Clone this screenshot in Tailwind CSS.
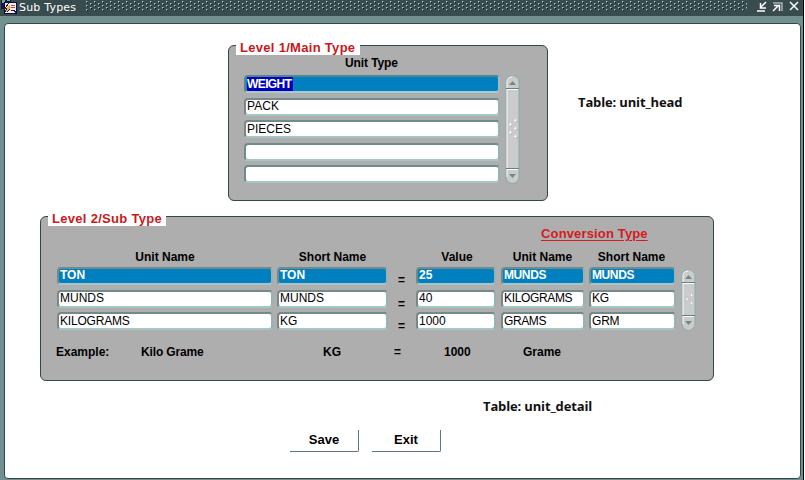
<!DOCTYPE html>
<html lang="en"><head><meta charset="utf-8"><title>Sub Types</title>
<script src="https://cdn.jsdelivr.net/npm/@tailwindcss/browser@4"></script></head>
<body class="w-[805px] h-[480px] overflow-hidden bg-white font-['Liberation_Sans',Arial,sans-serif] text-[12px] text-black">
<div class="w-[804px] h-[480px] bg-[#71908f] border-r border-black flex flex-col">
<header class="h-4 shrink-0 bg-[#384b4e] flex items-center text-white">
<svg class="ml-[1px] shrink-0" width="16" height="16" shape-rendering="crispEdges"><path d="M0 0h10v4H3v5H0z" fill="#101936"/><path d="M1 0h3v3H1zM6 0h3v1H6z" fill="#6ba5a4"/><path d="M3 2h13v12H3z" fill="#080850"/><path d="M4 3h11v10H4z" fill="#f5ede0"/><path d="M10 5h4v1h-4zM10 7h4v1h-4z" fill="#b64862"/><path d="M5 8l4-4v3h1l-5 5 1-3H5z" fill="#e8b23c"/><path d="M8 3L4 8h2l-2 4M9 9L6 12M10 10h3v1h1v2" stroke="#26184f" fill="none"/></svg>
<span class="ml-[2px] w-[68px] font-['DejaVu_Sans',sans-serif] text-[11px] tracking-[0.2px] leading-[14px] whitespace-nowrap -mt-[1px]">Sub Types</span>
<svg class="-ml-[1px] shrink-0" width="661" height="14" shape-rendering="crispEdges"><defs><pattern id="dots" width="8" height="4" patternUnits="userSpaceOnUse"><path d="M0 0h1v1H0zM4 2h1v1H4z" fill="#9bcac6"/><path d="M1 0h1v1H1zM0 1h1v1H0zM5 2h1v1H5zM4 3h1v1H4z" fill="#6b8f8c"/><path d="M1 1h1v1H1zM5 3h1v1H5z" fill="#050b0c"/></pattern></defs><path d="M0 0h661v10H0z" fill="url(#dots)"/></svg>
<svg class="ml-[9px] shrink-0" width="46" height="14" fill="none" stroke="#fff" stroke-width="1.5"><path d="M1 10h8M10 1L5 6M4.5 2v5H10"/><path d="M17 2h9v8" stroke="#a9b2b4"/><path d="M17 10l6-6M18 4.5h5.5V10"/><path d="M34 1l8 8M42 1l-8 8"/></svg>
</header>
<main class="mt-[7px] ml-1 w-[797px] h-[456px] border border-[#314848] rounded-[4px] bg-white flex flex-col">
<div class="ml-[223px] mt-[21px] flex items-start">
<section class="w-[320px] h-[156px] bg-[#aeaeae] border border-[#314848] rounded-[6px]">
<h2 class="-mt-[5px] ml-[7px] w-[124px] h-[14px] bg-white pl-[4px] text-[13px] leading-[13px] font-bold text-[#c71920] tracking-[0.3px] whitespace-nowrap">Level 1/Main Type</h2>
<div class="ml-[116px] h-[20px] text-[12px] leading-[17px] font-bold tracking-[-0.1px]">Unit Type</div>
<div class="ml-[15px] flex gap-[5px]">
<div class="w-[256px] grid grid-rows-[18px_18px_18px_18px_18px] gap-[4.5px]">
<div class="border-2 border-t-[#55858f] border-l-[#55858f] border-r-[#9dbcbc] border-b-[#a5cccd] rounded-[4px] bg-[#0080c0] pl-[1px] text-[12px] leading-[14px] font-bold text-white"><span class="inline-block h-[14px] w-[46px] bg-[#0000c0] tracking-[-0.6px]">WEIGHT</span></div>
<div class="border-2 border-t-[#738a8a] border-l-[#738a8a] border-r-[#94b3b2] border-b-[#a6c6c5] rounded-[4px] bg-white pl-[1px] leading-[13px] tracking-[0.1px]">PACK</div>
<div class="border-2 border-t-[#738a8a] border-l-[#738a8a] border-r-[#94b3b2] border-b-[#a6c6c5] rounded-[4px] bg-white pl-[1px] leading-[14px]">PIECES</div>
<div class="border-2 border-t-[#738a8a] border-l-[#738a8a] border-r-[#94b3b2] border-b-[#a6c6c5] rounded-[4px] bg-white"></div>
<div class="border-2 border-t-[#738a8a] border-l-[#738a8a] border-r-[#94b3b2] border-b-[#a6c6c5] rounded-[4px] bg-white"></div>
</div>
<svg width="15" height="109"><rect x="1" y=".5" width="13" height="108" rx="6.5" fill="#cbcbcb" stroke="#83acac"/><path d="M2 102V7Q2 2 7 2" stroke="#f5f5f5" fill="none"/><path d="M1 13.5h13M1 93.5h13" stroke="#637f7f"/><path d="M2 14.5h11M2 94.5h11" stroke="#fff"/><path d="M4 10h7L7.5 6zM4 99h7l-3.500 4z" fill="#718887"/><g fill="#9a9a9a"><circle cx="6" cy="50" r="1.3"/><circle cx="11" cy="46" r="1.3"/><circle cx="11" cy="54" r="1.3"/><circle cx="6" cy="58" r="1.3"/><circle cx="11" cy="62" r="1.3"/></g><g fill="#fff"><circle cx="5.500" cy="49.500" r="1.2"/><circle cx="10.500" cy="45.500" r="1.2"/><circle cx="10.500" cy="53.500" r="1.2"/><circle cx="5.500" cy="57.500" r="1.2"/><circle cx="10.500" cy="61.500" r="1.2"/></g></svg>
</div></section>
<p class="ml-[30px] mt-[49px] font-['Open_Sans',sans-serif] font-bold text-[13px] leading-[17px] tracking-[-0.15px] whitespace-nowrap text-[#111]">Table: unit_head</p>
</div>
<section class="mt-[15px] ml-[35px] w-[674px] h-[165px] shrink-0 bg-[#aeaeae] border border-[#314848] rounded-[6px]">
<h2 class="-mt-[6px] ml-[7px] w-[118px] h-[15px] bg-white pl-[4px] text-[13px] leading-[15px] font-bold text-[#c71920] tracking-[0.3px] whitespace-nowrap">Level 2/Sub Type</h2>
<div class="ml-[500px] h-[23px] text-[13px] leading-[16px] font-bold text-[#d51b20] underline underline-offset-[2px] tracking-[0.15px] whitespace-nowrap">Conversion Type</div>
<div class="ml-[16px] h-[18px] grid grid-cols-[216px_110px_80px_84px_87px] gap-x-[4.5px] text-center font-bold leading-[16px] whitespace-nowrap">
<span>Unit Name</span><span>Short Name</span><span class="ml-[25px] mr-[-25px]">Value</span><span class="ml-[24px] mr-[-24px]">Unit Name</span><span class="ml-[23px] mr-[-23px]">Short Name</span></div>
<div class="ml-[16px] flex">
<div class="grid grid-cols-[216px_111px_20px_80px_84px_87px] grid-rows-[18px_18px_18px] gap-x-[4px] gap-y-[4.6px] leading-[13px] whitespace-nowrap [&>div]:border-2 [&>div]:border-t-[#738a8a] [&>div]:border-l-[#738a8a] [&>div]:border-r-[#94b3b2] [&>div]:border-b-[#a6c6c5] [&>div]:rounded-[4px] [&>div]:pl-[1px]">
<div class="bg-[#0080c0] text-white font-bold">TON</div><div class="bg-[#0080c0] text-white font-bold">TON</div><span class="pl-[6px] pt-[7px] font-bold">=</span><div class="bg-[#0080c0] text-white font-bold">25</div><div class="ml-[1px] -mr-[1px] bg-[#0080c0] text-white font-bold tracking-[-0.4px]">MUNDS</div><div class="ml-[1px] -mr-[1px] bg-[#0080c0] text-white font-bold tracking-[-0.4px]">MUNDS</div>
<div class="bg-white">MUNDS</div><div class="bg-white">MUNDS</div><span class="pl-[6px] pt-[8px] font-bold">=</span><div class="bg-white">40</div><div class="ml-[1px] -mr-[1px] bg-white tracking-[-0.35px]">KILOGRAMS</div><div class="ml-[1px] -mr-[1px] bg-white tracking-[-0.3px]">KG</div>
<div class="bg-white tracking-[-0.2px] leading-[14px]">KILOGRAMS</div><div class="bg-white leading-[14px]">KG</div><span class="pl-[6px] pt-[8px] font-bold">=</span><div class="bg-white leading-[14px]">1000</div><div class="ml-[1px] -mr-[1px] bg-white tracking-[-0.4px] leading-[14px]">GRAMS</div><div class="ml-[1px] -mr-[1px] bg-white tracking-[-0.2px] leading-[14px]">GRM</div>
</div>
<svg class="ml-[6px] mt-[2px]" width="15" height="62"><rect x="1" y=".5" width="13" height="61" rx="6.5" fill="#cbcbcb" stroke="#83acac"/><path d="M2 55V7Q2 2 7 2" stroke="#f5f5f5" fill="none"/><path d="M1 13.5h13M1 46.5h13" stroke="#637f7f"/><path d="M2 14.5h11M2 47.500h11" stroke="#fff"/><path d="M4 10h7L7.5 6zM4 52h7l-3.500 4z" fill="#718887"/><g fill="#fff" stroke="#aaa" stroke-width=".4"><circle cx="6" cy="30" r="1.3"/><circle cx="10.500" cy="26" r="1.3"/><circle cx="10.500" cy="34" r="1.3"/></g></svg>
</div>
<div class="ml-[15px] mt-[13px] grid grid-cols-[85px_182px_71px_50px_79px_80px] font-bold leading-[16px]"><span>Example:</span><span class="tracking-[-0.15px]">Kilo Grame</span><span>KG</span><span>=</span><span>1000</span><span>Grame</span></div>
</section>
<p class="ml-[478px] mt-[17px] font-['Open_Sans',sans-serif] font-bold text-[13px] leading-[17px] tracking-[-0.15px] whitespace-nowrap text-[#111]">Table: unit_detail</p>
<div class="ml-[285px] mt-[15px] flex gap-[13px]"><button class="w-[69px] h-[22px] border-r border-b border-[#607978] rounded-br-[2px] text-[13px] leading-[17px] pb-[3px] font-bold">Save</button><button class="w-[69px] h-[22px] border-r border-b border-[#607978] rounded-br-[2px] text-[13px] leading-[17px] pb-[3px] font-bold">Exit</button></div>
</main></div>
</body></html></script>
